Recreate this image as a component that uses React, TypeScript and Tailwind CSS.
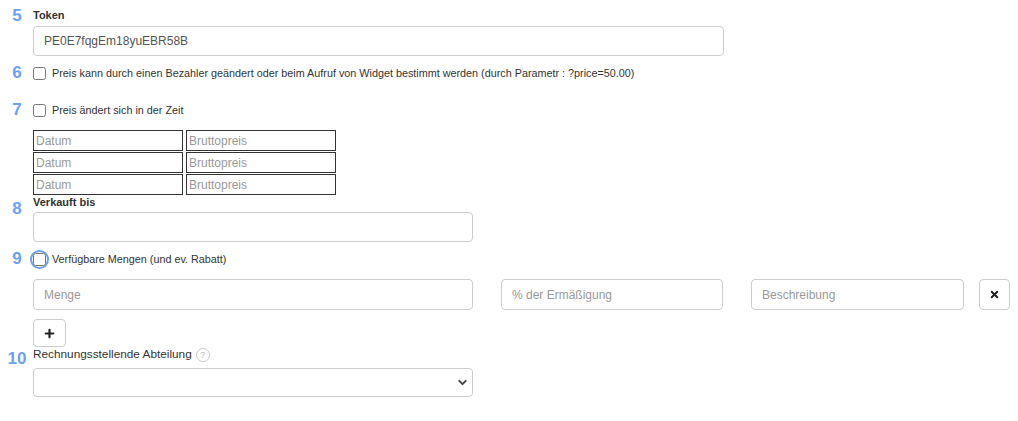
import { ChevronDown, Plus, X } from "lucide-react"
import { FC, ReactNode } from "react"

const Num: FC<{ n: string; className?: string }> = ({ n, className = "" }) => (
  <div
    className={`w-[33px] shrink-0 pl-[1px] text-center text-[17px] font-bold leading-[20px] text-[#6ca1f1] ${className}`}
  >
    {n}
  </div>
)

const CheckRow: FC<{ n: string; children: ReactNode; focused?: boolean; className?: string }> = ({
  n,
  children,
  focused,
  className = "",
}) => (
  <div className={`flex h-[22px] items-center ${className}`}>
    <Num n={n} />
    {focused ? (
      <span className="-mx-[1px] flex h-[15px] w-[15px] items-center justify-center rounded-full ring-[2px] ring-[#6fa1ee]">
        <input type="checkbox" className="m-0 h-[13px] w-[13px]" />
      </span>
    ) : (
      <input type="checkbox" className="m-0 h-[13px] w-[13px]" />
    )}
    <span className="ml-[6px] text-[10.8px] text-[#333]">{children}</span>
  </div>
)

const inputCls =
  "h-full rounded-[4px] border border-[#ccc] bg-white px-[10px] text-[12px] text-[#555] outline-none placeholder:text-[#999]"

const cellCls =
  "h-[21px] w-[150px] border border-[#333] px-[2px] text-[12px] outline-none placeholder:text-[#999]"

export default function App() {
  return (
    <div
      className="flex w-[1018px] flex-col bg-white pb-[23px]"
      style={{ fontFamily: '"Liberation Sans", Arial, sans-serif' }}
    >
      {/* 5 */}
      <div className="flex items-start pt-[8px]">
        <Num n="5" className="-mt-[2px]" />
        <div className="flex flex-col">
          <div className="text-[11px] font-bold leading-[14px] text-[#333]">Token</div>
          <div className="mt-[4px] h-[30px] w-[691px]">
            <input className={`${inputCls} w-full`} defaultValue="PE0E7fqgEm18yuEBR58B" />
          </div>
        </div>
      </div>

      <CheckRow n="6" className="mt-[6px]">
        Preis kann durch einen Bezahler geändert oder beim Aufruf von Widget bestimmt werden (durch Parametr : ?price=50.00)
      </CheckRow>

      <CheckRow n="7" className="mt-[15px]">
        Preis ändert sich in der Zeit
      </CheckRow>

      <div className="mt-[9px] box-content grid w-[303px] grid-cols-2 gap-x-[3px] gap-y-[1px] pl-[33px]">
        {[0, 1, 2].map((i) => (
          <div key={i} className="contents">
            <input placeholder="Datum" className={cellCls} />
            <input placeholder="Bruttopreis" className={cellCls} />
          </div>
        ))}
      </div>

      {/* 8 */}
      <div className="flex items-start">
        <Num n="8" className="mt-[4px]" />
        <div className="flex flex-col">
          <div className="text-[11px] font-bold leading-[14px] text-[#333]">Verkauft bis</div>
          <div className="mt-[3px] h-[30px] w-[440px]">
            <input className={`${inputCls} w-full`} />
          </div>
        </div>
      </div>

      <CheckRow n="9" focused className="mt-[6px]">
        Verfügbare Mengen (und ev. Rabatt)
      </CheckRow>

      <div className="mt-[9px] flex h-[31px] pl-[33px]">
        <input placeholder="Menge" className={`${inputCls} w-[440px]`} />
        <input placeholder="% der Ermäßigung" className={`${inputCls} ml-[28px] w-[222px]`} />
        <input placeholder="Beschreibung" className={`${inputCls} ml-[28px] w-[213px]`} />
        <button className="ml-[15px] flex w-[31px] items-center justify-center rounded-[4px] border border-[#ccc] bg-white text-[#222]">
          <X size={11} strokeWidth={4.5} />
        </button>
      </div>

      <div className="mt-[9px] pl-[33px]">
        <button className="flex h-[28px] w-[33px] items-center justify-center rounded-[4px] border border-[#ccc] bg-white text-[#222]">
          <Plus size={13} strokeWidth={4} />
        </button>
      </div>

      {/* 10 */}
      <div className="flex items-start">
        <Num n="10" className="mt-[2px]" />
        <div className="flex flex-col">
          <div className="flex h-[16px] items-center text-[11.8px] text-[#333]">
            Rechnungsstellende Abteilung
            <span className="ml-[4px] flex h-[14px] w-[14px] items-center justify-center rounded-full border border-[#ccc] text-[9px] leading-none text-[#bbb]">
              ?
            </span>
          </div>
          <div className="relative mt-[5px] h-[29px] w-[440px]">
            <select className={`${inputCls} w-full appearance-none`} />
            <ChevronDown
              size={13}
              strokeWidth={3.5}
              className="pointer-events-none absolute right-[4px] top-[8px] text-[#444]"
            />
          </div>
        </div>
      </div>
    </div>
  )
}
